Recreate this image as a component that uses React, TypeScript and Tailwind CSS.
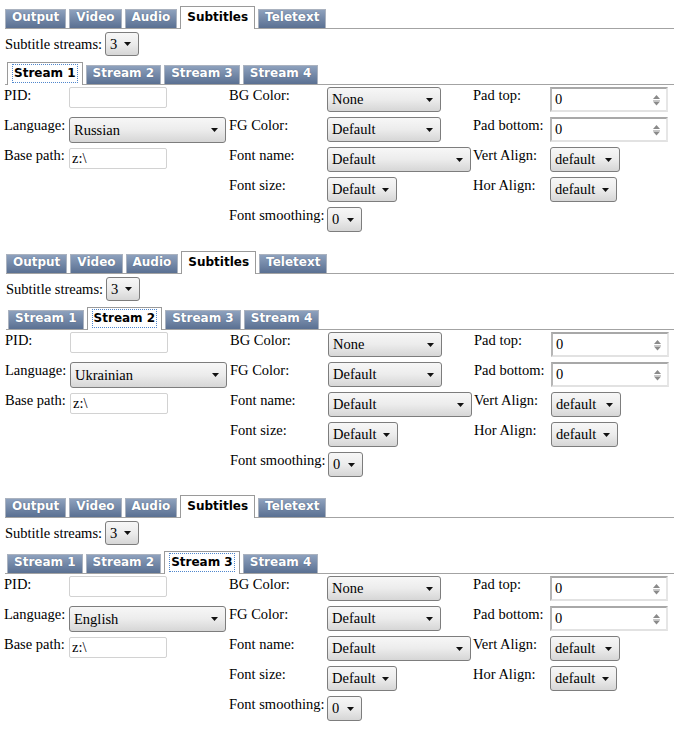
import type { ReactNode } from 'react'

const TOP_TABS = ['Output', 'Video', 'Audio', 'Subtitles', 'Teletext']
const STREAM_TABS = ['Stream 1', 'Stream 2', 'Stream 3', 'Stream 4']

type TabProps = {
  label: string
  active?: boolean
  focused?: boolean
}

function Tab({ label, active, focused }: TabProps) {
  if (active) {
    return (
      <div className="relative -mb-px flex h-[23px] items-start border border-b-0 border-[#9a9a9a] bg-white px-[6px] pt-[3px] text-black">
        <span
          className={
            focused
              ? 'leading-[15px] outline-1 outline-offset-[1px] outline-dotted outline-[#4f86cc]'
              : 'leading-[15px]'
          }
        >
          {label}
        </span>
      </div>
    )
  }
  return (
    <div className="flex h-[19px] items-start border border-b-0 border-[#aab2bf] bg-gradient-to-b from-[#8ea1bd] to-[#5a7092] px-[6px] text-white [text-shadow:0_0_1px_rgba(30,45,70,0.5)]">
      <span className="leading-[15px]">{label}</span>
    </div>
  )
}

function TabBar({ tabs, active, focused, className }: { tabs: string[]; active: number; focused?: boolean; className: string }) {
  return (
    <div
      className={`flex h-[23px] items-end gap-[3px] border-b border-[#a3a3a3] font-['DejaVu_Sans',Verdana,sans-serif] text-[12px] font-bold ${className}`}
    >
      {tabs.map((t, i) => (
        <Tab key={t} label={t} active={i === active} focused={focused && i === active} />
      ))}
    </div>
  )
}

function Arrow() {
  return (
    <svg width="7" height="4" viewBox="0 0 7 4" className="shrink-0">
      <path d="M0 0H7L3.5 4Z" fill="#111" />
    </svg>
  )
}

function Select({ value, className }: { value: string; className: string }) {
  return (
    <div
      className={`flex items-center justify-between rounded-[3px] border border-[#7d7d7d] bg-gradient-to-b from-[#f7f7f7] via-[#ececec] to-[#d6d6d6] pl-[4px] pr-[7px] leading-[23px] ${className}`}
    >
      <span>{value}</span>
      <Arrow />
    </div>
  )
}

function TextInput({ value }: { value?: string }) {
  return (
    <div className="h-[21px] w-[98px] rounded-[2px] border border-[#d2d2d2] bg-white pl-[2px] leading-[19px]">
      {value}
    </div>
  )
}

function NumberInput() {
  return (
    <div className="flex h-[25px] w-[118px] items-center justify-between border-2 border-t-[#a8a8a8] border-l-[#b5b5b5] border-r-[#e6e6e6] border-b-[#e2e2e2] bg-white pl-[3px] pr-[5px] leading-[21px]">
      <span>0</span>
      <svg width="9" height="12" viewBox="0 0 9 12">
        <path d="M1 5L4.5 1L8 5Z" fill="#8a8a8a" />
        <path d="M1 6.5H8" stroke="#c8c8c8" strokeWidth="1" />
        <path d="M1 7.5H8L4.5 11.5Z" fill="#8a8a8a" />
      </svg>
    </div>
  )
}

function Label({ children }: { children?: ReactNode }) {
  return <div className="whitespace-nowrap leading-[18px]">{children}</div>
}

function Cell({ children }: { children?: ReactNode }) {
  return <div className="pt-px">{children}</div>
}

type PanelProps = {
  stream: number
  language: string
  className: string
}

function SubtitlesPanel({ stream, language, className }: PanelProps) {
  return (
    <div className={`pt-[6px] ${className}`}>
      <TabBar tabs={TOP_TABS} active={3} className="ml-[5px]" />

      <div className="mt-[3px] flex h-[24px] items-center gap-[3px] pl-[5px]">
        <span className="leading-[18px]">Subtitle streams:</span>
        <Select value="3" className="h-[24px] w-[34px] leading-[22px]" />
      </div>

      <TabBar tabs={STREAM_TABS} active={stream} focused className="ml-[5px] mt-[6px] pl-[2px]" />

      <div className="mt-px grid auto-rows-[30px] grid-cols-[65px_160px_98px_146px_77px_118px] pl-[4px]">
        <Label>PID:</Label>
        <Cell>
          <TextInput />
        </Cell>
        <Label>BG Color:</Label>
        <Cell>
          <Select value="None" className="h-[25px] w-[114px]" />
        </Cell>
        <Label>Pad top:</Label>
        <Cell>
          <NumberInput />
        </Cell>

        <Label>Language:</Label>
        <Cell>
          <Select value={language} className="h-[26px] w-[157px] leading-[24px]" />
        </Cell>
        <Label>FG Color:</Label>
        <Cell>
          <Select value="Default" className="h-[25px] w-[114px]" />
        </Cell>
        <Label>Pad bottom:</Label>
        <Cell>
          <NumberInput />
        </Cell>

        <Label>Base path:</Label>
        <Cell>
          <div className="pt-px">
            <TextInput value="z:\" />
          </div>
        </Cell>
        <Label>Font name:</Label>
        <Cell>
          <Select value="Default" className="h-[25px] w-[144px]" />
        </Cell>
        <Label>Vert Align:</Label>
        <Cell>
          <Select value="default" className="h-[25px] w-[70px]" />
        </Cell>

        <div />
        <div />
        <Label>Font size:</Label>
        <Cell>
          <Select value="Default" className="h-[25px] w-[70px]" />
        </Cell>
        <Label>Hor Align:</Label>
        <Cell>
          <Select value="default" className="h-[25px] w-[67px]" />
        </Cell>

        <div />
        <div />
        <Label>Font smoothing:</Label>
        <Cell>
          <Select value="0" className="h-[25px] w-[35px]" />
        </Cell>
        <div />
        <div />
      </div>
    </div>
  )
}

export default function App() {
  return (
    <div className="min-h-[733px] w-[674px] bg-white font-['Liberation_Serif','Times_New_Roman',serif] text-[14.5px] text-black">
      <SubtitlesPanel stream={0} language="Russian" className="h-[245px]" />
      <SubtitlesPanel stream={1} language="Ukrainian" className="h-[244px] pl-px" />
      <SubtitlesPanel stream={2} language="English" className="h-[244px]" />
    </div>
  )
}
